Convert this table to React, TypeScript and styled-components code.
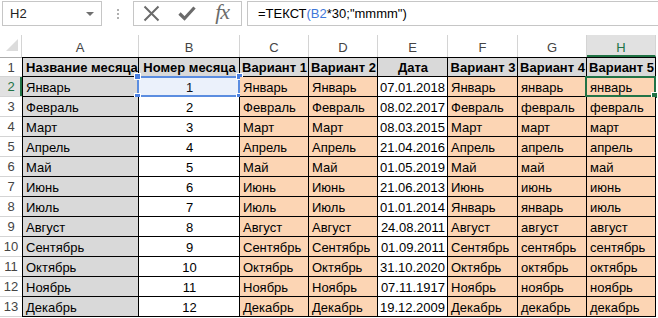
import React from "react";
import styled, { createGlobalStyle, css } from "styled-components";

type Tone = "gray" | "peach" | "white";

const GlobalStyle = createGlobalStyle`
  html, body {
    margin: 0;
    padding: 0;
    background: #fff;
  }
  body {
    font-family: "Liberation Sans", Arial, sans-serif;
    font-size: 13px;
    color: #000;
    overflow: hidden;
  }
`;

const Page = styled.div`
  width: 658px;
  height: 318px;
  overflow: hidden;
`;

/* ---------- formula bar ---------- */

const FormulaBar = styled.div`
  display: flex;
  align-items: stretch;
  height: 25px;
  padding: 1px 0 0 2px;
`;

const NameBox = styled.div`
  box-sizing: border-box;
  width: 100px;
  display: flex;
  align-items: center;
  justify-content: space-between;
  padding: 0 7px;
  border: 1px solid #c6c6c6;
  color: #222;
`;

const DropArrow = styled.span`
  width: 0;
  height: 0;
  border-left: 4px solid transparent;
  border-right: 4px solid transparent;
  border-top: 4px solid #6f6f6f;
`;

const Grip = styled.div`
  width: 31px;
  display: flex;
  flex-direction: column;
  align-items: center;
  justify-content: center;
  gap: 2px;

  span {
    width: 2px;
    height: 2px;
    background: #b0b0b0;
  }
`;

const IconGroup = styled.div`
  box-sizing: border-box;
  width: 109px;
  display: flex;
  align-items: center;
  border: 1px solid #c6c6c6;
  margin-right: 5px;
`;

const IconButton = styled.div<{ $w: number }>`
  width: ${({ $w }) => $w}px;
  height: 100%;
  display: flex;
  align-items: center;
  justify-content: center;
`;

const Fx = styled.span`
  font-family: "Liberation Serif", "Times New Roman", serif;
  font-style: italic;
  font-size: 22px;
  color: #6b6b6b;
  letter-spacing: -1px;
  margin-top: -3px;
`;

const FormulaInput = styled.div`
  box-sizing: border-box;
  flex: 1;
  display: flex;
  align-items: center;
  padding-left: 10px;
  border: 1px solid #c6c6c6;
  border-right: none;
  white-space: pre;
`;

const RefText = styled.span`
  color: #3f77d9;
`;

/* ---------- sheet grid ---------- */

const Sheet = styled.div`
  display: grid;
  grid-template-columns: 22px 117px 101px 69px 69px 70px 70px 69px 69px;
  grid-template-rows: 22px repeat(13, 20px);
  margin-top: 9px;
`;

const Corner = styled.div`
  box-sizing: border-box;
  display: flex;
  align-items: flex-end;
  justify-content: flex-end;
  padding: 0 3px 6px 0;
  border-right: 1px solid #d4d4d4;

  span {
    width: 0;
    height: 0;
    border-left: 12px solid transparent;
    border-bottom: 12px solid #dcdcdc;
  }
`;

const ColHead = styled.div<{ $active?: boolean }>`
  box-sizing: border-box;
  display: flex;
  align-items: center;
  justify-content: center;
  padding-top: 2px;
  border-right: 1px solid #d4d4d4;
  color: #444;
  ${({ $active }) =>
    $active &&
    css`
      background: #e1e1e1;
      color: #217346;
      border-bottom: 2px solid #217346;
      padding-top: 4px;
    `}
`;

const RowHead = styled.div<{ $active?: boolean; $top?: boolean }>`
  box-sizing: border-box;
  display: flex;
  align-items: center;
  justify-content: center;
  border-bottom: 1px solid #d4d4d4;
  color: #444;
  ${({ $top }) => $top && "border-top: 1px solid #ababab;"}
  ${({ $active }) =>
    $active &&
    css`
      background: #e1e1e1;
      color: #217346;
      box-shadow: inset -2px 0 0 #217346;
    `}
`;

const toneColors: Record<Tone, string> = {
  gray: "#d9d9d9",
  peach: "#fcd5b4",
  white: "#ffffff",
};

const Cell = styled.div<{
  $tone: Tone;
  $align?: "left" | "center" | "right";
  $bold?: boolean;
  $top?: boolean;
  $left?: boolean;
}>`
  position: relative;
  box-sizing: border-box;
  display: flex;
  align-items: center;
  justify-content: ${({ $align }) =>
    $align === "center" ? "center" : $align === "right" ? "flex-end" : "flex-start"};
  padding: 1px 2px 0 3px;
  background: ${({ $tone }) => toneColors[$tone]};
  font-weight: ${({ $bold }) => ($bold ? 700 : 400)};
  white-space: nowrap;
  border-right: 1px solid #000;
  border-bottom: 1px solid #000;
  ${({ $top }) => $top && "border-top: 1px solid #000;"}
  ${({ $left }) => $left && "border-left: 1px solid #000;"}
`;

// blue frame drawn around the cell referenced by the formula
const RefFrame = styled.div`
  position: absolute;
  top: -1px;
  left: -2px;
  right: -1px;
  bottom: -1px;
  border: 2px solid #5b8de0;
  background: rgba(91, 141, 224, 0.12);
  pointer-events: none;
`;

const Handle = styled.span<{ $v: "top" | "bottom"; $h: "left" | "right" }>`
  position: absolute;
  width: 5px;
  height: 5px;
  background: #4a7fe0;
  border: 1px solid #fff;
  ${({ $v }) => `${$v}: -5px;`}
  ${({ $h }) => `${$h}: -5px;`}
`;

// active cell outline with its fill handle
const SelectFrame = styled.div`
  position: absolute;
  top: -1px;
  left: -2px;
  right: -1px;
  bottom: -1px;
  border: 2px solid #217346;
  pointer-events: none;
`;

const FillHandle = styled.span`
  position: absolute;
  right: -4px;
  bottom: -4px;
  width: 5px;
  height: 5px;
  background: #217346;
  border: 1px solid #fff;
`;

/* ---------- data ---------- */

type Row = {
  name: string;
  num: number;
  date: string;
  v3: string;
  v4: string;
  v5: string;
};

const rows: Row[] = [
  { name: "Январь", num: 1, date: "07.01.2018", v3: "Январь", v4: "январь", v5: "январь" },
  { name: "Февраль", num: 2, date: "08.02.2017", v3: "Февраль", v4: "февраль", v5: "февраль" },
  { name: "Март", num: 3, date: "08.03.2015", v3: "Март", v4: "март", v5: "март" },
  { name: "Апрель", num: 4, date: "21.04.2016", v3: "Апрель", v4: "апрель", v5: "апрель" },
  { name: "Май", num: 5, date: "01.05.2019", v3: "Май", v4: "май", v5: "май" },
  { name: "Июнь", num: 6, date: "21.06.2013", v3: "Июнь", v4: "июнь", v5: "июнь" },
  { name: "Июль", num: 7, date: "01.01.2014", v3: "Январь", v4: "январь", v5: "июль" },
  { name: "Август", num: 8, date: "24.08.2011", v3: "Август", v4: "август", v5: "август" },
  { name: "Сентябрь", num: 9, date: "01.09.2011", v3: "Сентябрь", v4: "сентябрь", v5: "сентябрь" },
  { name: "Октябрь", num: 10, date: "31.10.2020", v3: "Октябрь", v4: "октябрь", v5: "октябрь" },
  { name: "Ноябрь", num: 11, date: "07.11.1917", v3: "Ноябрь", v4: "ноябрь", v5: "ноябрь" },
  { name: "Декабрь", num: 12, date: "19.12.2009", v3: "Декабрь", v4: "декабрь", v5: "декабрь" },
];

const letters = ["A", "B", "C", "D", "E", "F", "G", "H"];
const headers = [
  "Название месяца",
  "Номер месяца",
  "Вариант 1",
  "Вариант 2",
  "Дата",
  "Вариант 3",
  "Вариант 4",
  "Вариант 5",
];

function CancelIcon() {
  return (
    <svg width="17" height="17" viewBox="0 0 17 17">
      <path d="M1.5 1.5 L15.5 15.5 M15.5 1.5 L1.5 15.5" stroke="#6b6b6b" strokeWidth="2" />
    </svg>
  );
}

function EnterIcon() {
  return (
    <svg width="18" height="15" viewBox="0 0 18 15">
      <path d="M1.5 7.5 L6.5 12.5 L16.5 1.5" fill="none" stroke="#6b6b6b" strokeWidth="3.2" />
    </svg>
  );
}

export default function App() {
  return (
    <Page>
      <GlobalStyle />
      <FormulaBar>
        <NameBox>
          <span>H2</span>
          <DropArrow />
        </NameBox>
        <Grip>
          <span />
          <span />
          <span />
        </Grip>
        <IconGroup>
          <IconButton $w={36}>
            <CancelIcon />
          </IconButton>
          <IconButton $w={34}>
            <EnterIcon />
          </IconButton>
          <IconButton $w={38}>
            <Fx>fx</Fx>
          </IconButton>
        </IconGroup>
        <FormulaInput>
          {"=ТЕКСТ"}
          <RefText>(B2</RefText>
          {'*30;"mmmm")'}
        </FormulaInput>
      </FormulaBar>

      <Sheet>
        <Corner>
          <span />
        </Corner>
        {letters.map((l) => (
          <ColHead key={l} $active={l === "H"}>
            {l}
          </ColHead>
        ))}

        <RowHead $top>1</RowHead>
        {headers.map((h, i) => (
          <Cell key={h} $tone="gray" $bold $top $left={i === 0} $align={i === 0 ? "left" : "center"}>
            {h}
          </Cell>
        ))}

        {rows.map((r, i) => {
          const rowNo = i + 2;
          const first = rowNo === 2;
          return (
            <React.Fragment key={r.name}>
              <RowHead $active={first}>{rowNo}</RowHead>
              <Cell $tone="gray" $left>
                {r.name}
              </Cell>
              <Cell $tone="white" $align="center">
                {r.num}
                {first && (
                  <RefFrame>
                    <Handle $v="top" $h="left" />
                    <Handle $v="top" $h="right" />
                    <Handle $v="bottom" $h="left" />
                    <Handle $v="bottom" $h="right" />
                  </RefFrame>
                )}
              </Cell>
              <Cell $tone="peach">{r.name}</Cell>
              <Cell $tone="peach">{r.name}</Cell>
              <Cell $tone="white" $align="right">
                {r.date}
              </Cell>
              <Cell $tone="peach">{r.v3}</Cell>
              <Cell $tone="peach">{r.v4}</Cell>
              <Cell $tone="peach">
                {r.v5}
                {first && (
                  <SelectFrame>
                    <FillHandle />
                  </SelectFrame>
                )}
              </Cell>
            </React.Fragment>
          );
        })}
      </Sheet>
    </Page>
  );
}
